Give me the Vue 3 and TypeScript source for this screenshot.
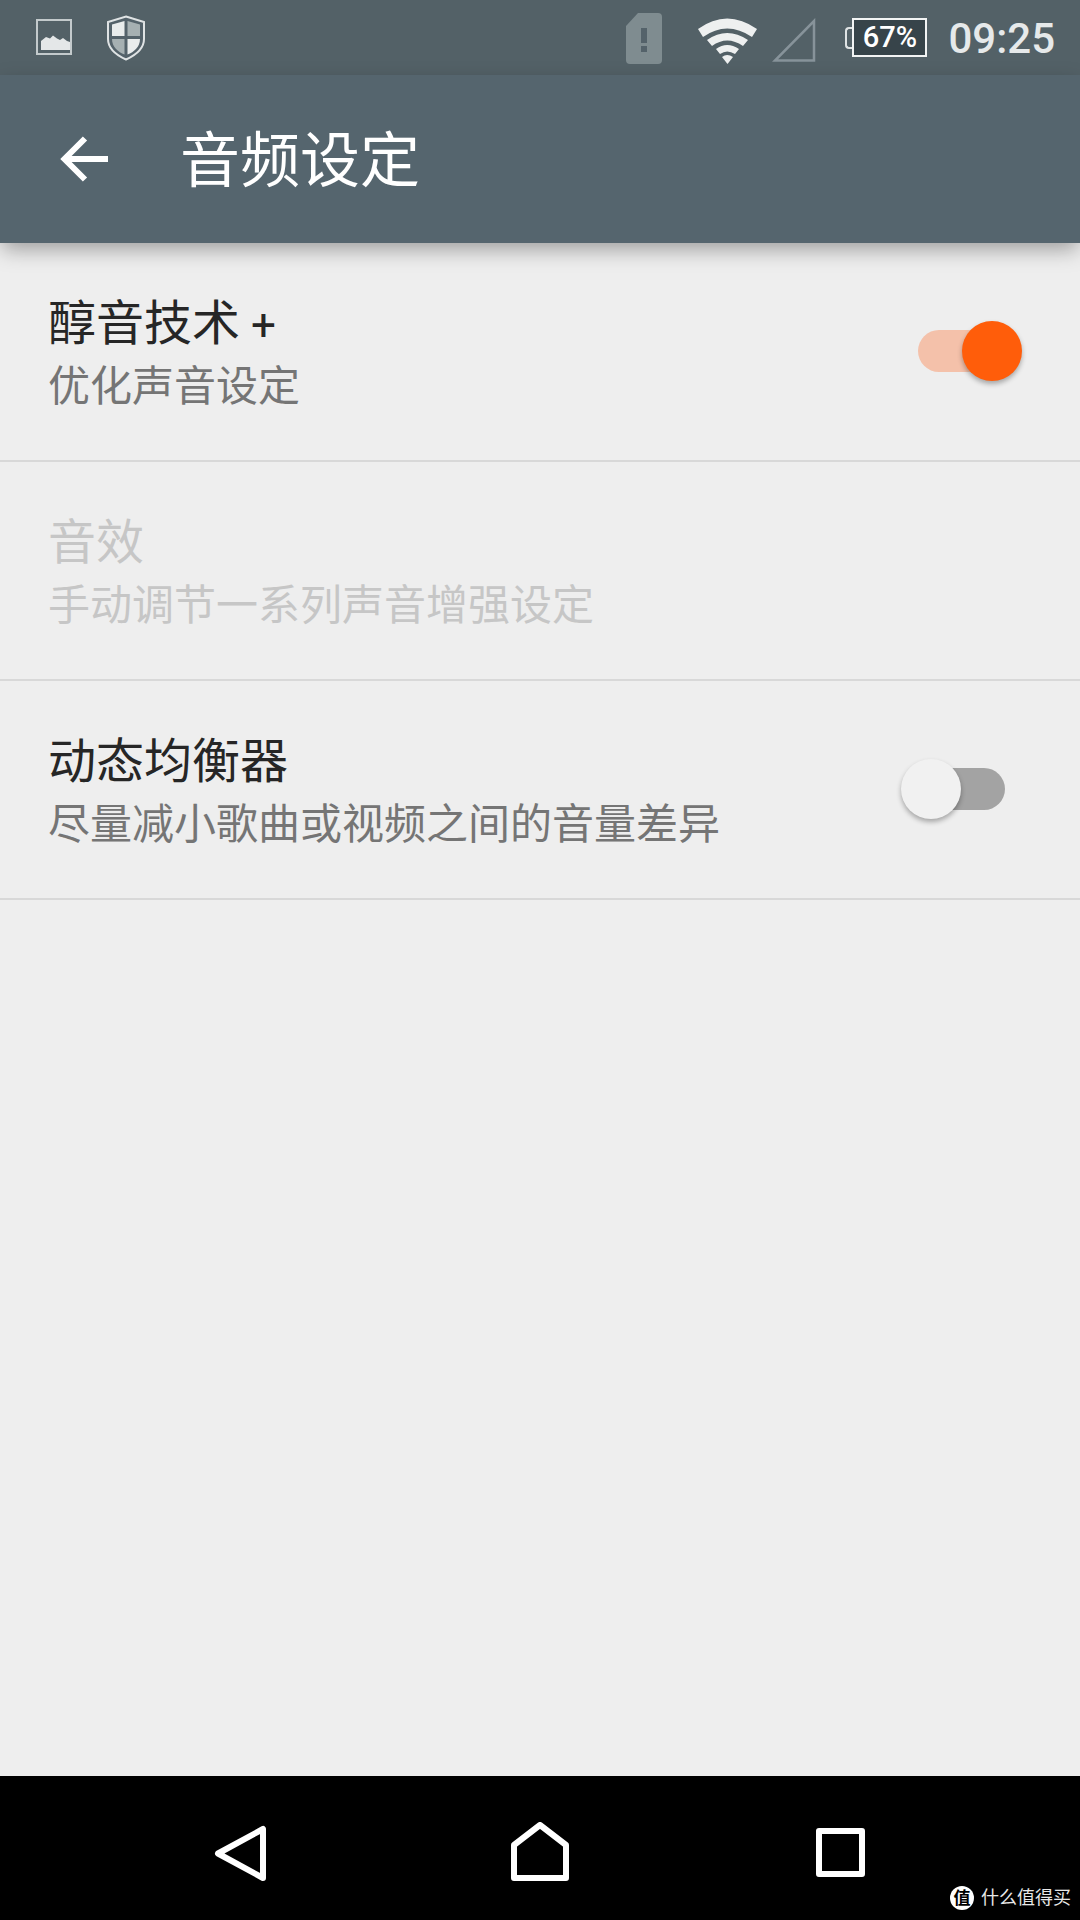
<template>
  <div class="page">
    <header class="status-bar">
      <svg class="ic-image" viewBox="0 0 36 36">
        <rect x="1" y="1" width="34" height="34" fill="none" stroke="#c3cacc" stroke-width="2" />
        <path d="M5 31V22l5-4 4 1.500 3-3 4 3 3 1.500 3-2 4 3 3 1V31Z" fill="#e4e7e8" />
      </svg>
      <svg class="ic-shield" viewBox="0 0 38 46">
        <path d="M19 1.500 37 7v17c0 10-8 16-18 20.500C9 40 1 34 1 24V7Z" fill="#54626a" stroke="#dfe3e4" stroke-width="2" />
        <path d="M5 9.500 17.500 6v15H5Z" fill="#e9ecec" />
        <path d="M20.500 6 33 9.500V21H20.500Z" fill="#a6b0b2" />
        <path d="M5 24h12.500v15.500C11 37 5 32 5 24Z" fill="#a6b0b2" />
        <path d="M20.500 24H33c0 8-6 13-12.500 15.500Z" fill="#e9ecec" />
      </svg>
      <span class="spacer"></span>
      <svg class="ic-sim" viewBox="0 0 36 51">
        <path d="M12 0h20q4 0 4 4v43q0 4-4 4H4q-4 0-4-4V13Z" fill="#7f8c90" />
        <rect x="15" y="15" width="6" height="15" fill="#54626a" />
        <rect x="15" y="33" width="6" height="6" fill="#54626a" />
      </svg>
      <svg class="ic-wifi" viewBox="0 0 59 47">
        <path d="M0 12Q29-9 59 12L54 20Q29 3 5 20Z" fill="#eef0f0" />
        <path d="M9 23Q29 9 50 23L45 29Q29 18 14 29Z" fill="#eef0f0" />
        <path d="M18 32Q29 24 41 32L37 37Q29 32 22 37Z" fill="#eef0f0" />
        <path d="M24 40Q29 36 35 40L29.500 47Z" fill="#eef0f0" />
      </svg>
      <svg class="ic-signal" viewBox="0 0 44 44">
        <path d="M42 3V42.500H3Z" fill="none" stroke="#87939a" stroke-width="2.500" />
      </svg>
      <div class="battery">
        <span class="battery-cap"></span>
        <span class="battery-body">67%</span>
      </div>
      <span class="clock">09:25</span>
    </header>

    <div class="toolbar">
      <svg class="ic-back" viewBox="0 0 48 48">
        <path d="M48 24H7M25 3.500 4.500 24 25 44.500" fill="none" stroke="#fff" stroke-width="6" />
      </svg>
      <h1 class="toolbar-title">音频设定</h1>
    </div>

    <main class="list">
      <div v-for="row in rows" :key="row.title" class="row" :class="{ disabled: row.disabled }">
        <div class="row-text">
          <div class="row-title">{{ row.title }}<span v-if="row.plus" class="plus"> +</span></div>
          <div class="row-sub">{{ row.sub }}</div>
        </div>
        <div v-if="row.on !== undefined" class="switch" :class="{ on: row.on }">
          <span class="track"></span>
          <span class="thumb"></span>
        </div>
      </div>
    </main>

    <nav class="nav-bar">
      <svg class="ic-nav-back" viewBox="0 0 52 57">
        <path d="M49 4V53L4 28.500Z" fill="none" stroke="#fff" stroke-width="6" stroke-linejoin="round" />
      </svg>
      <svg class="ic-nav-home" viewBox="0 0 58 59">
        <path d="M3 56V23L29 3 55 23V56Z" fill="none" stroke="#fff" stroke-width="6" stroke-linejoin="round" />
      </svg>
      <span class="nav-square"></span>
      <div class="watermark">
        <span class="watermark-badge">值</span>
        <span>什么值得买</span>
      </div>
    </nav>
  </div>
</template>

<script setup lang="ts">
interface SettingRow {
  title: string
  sub: string
  plus?: boolean
  on?: boolean
  disabled?: boolean
}

const rows: SettingRow[] = [
  { title: '醇音技术', plus: true, sub: '优化声音设定', on: true },
  { title: '音效', sub: '手动调节一系列声音增强设定', disabled: true },
  { title: '动态均衡器', sub: '尽量减小歌曲或视频之间的音量差异', on: false },
]
</script>

<style>
body {
  margin: 0;
}
</style>

<style scoped>
.page {
  width: 1080px;
  height: 1920px;
  display: flex;
  flex-direction: column;
  background: #eeeeee;
  font-family: Roboto, "Noto Sans CJK SC", sans-serif;
  overflow: hidden;
}

.status-bar {
  height: 75px;
  flex: none;
  display: flex;
  align-items: flex-start;
  padding-left: 36px;
  background: #536167;
  box-sizing: border-box;
}

.ic-image {
  width: 36px;
  height: 36px;
  margin-top: 19px;
}

.ic-shield {
  width: 38px;
  height: 46px;
  margin: 15px 0 0 35px;
}

.spacer {
  flex: 1;
}

.ic-sim {
  width: 36px;
  height: 51px;
  margin-top: 13px;
}

.ic-wifi {
  width: 59px;
  height: 47px;
  margin: 17px 0 0 36px;
}

.ic-signal {
  width: 44px;
  height: 44px;
  margin: 18px 0 0 15px;
}

.battery {
  display: flex;
  align-items: center;
  margin: 18px 0 0 29px;
}

.battery-cap {
  width: 7px;
  height: 22px;
  border: 2px solid #dfe3e4;
  border-right: none;
  border-radius: 4px 0 0 4px;
  box-sizing: border-box;
}

.battery-body {
  width: 75px;
  height: 39px;
  box-sizing: border-box;
  border: 2px solid #f2f4f4;
  background: #37444a;
  color: #fff;
  font-size: 29px;
  font-weight: 500;
  line-height: 35px;
  text-align: center;
}

.clock {
  margin: 15px 25px 0 21px;
  color: #e6e9ea;
  font-size: 42px;
  font-weight: 500;
  line-height: 48px;
}

.toolbar {
  height: 168px;
  flex: none;
  display: flex;
  align-items: center;
  padding-left: 60px;
  background: #55656e;
  box-shadow: 0 8px 20px -2px rgba(0, 0, 0, 0.35);
  position: relative;
  box-sizing: border-box;
}

.ic-back {
  width: 48px;
  height: 48px;
}

.toolbar-title {
  margin: 6px 0 0 72px;
  color: #fff;
  font-size: 60px;
  font-weight: 400;
  line-height: 80px;
}

.list {
  flex: 1;
}

.row {
  height: 219px;
  box-sizing: border-box;
  border-bottom: 2px solid #d8d8d8;
  display: flex;
  align-items: flex-start;
  justify-content: space-between;
  padding: 48px 0 0 48px;
}

.row-title {
  height: 66px;
  color: #262626;
  font-size: 48px;
  line-height: 66px;
}

.plus {
  font-size: 44px;
  line-height: 1;
}

.row-sub {
  margin-top: 2px;
  color: #757575;
  font-size: 42px;
  line-height: 56px;
}

.row.disabled .row-title,
.row.disabled .row-sub {
  color: #c6c6c6;
}

.switch {
  position: relative;
  width: 121px;
  height: 60px;
  margin: 30px 58px 0 0;
}

.track {
  position: absolute;
  left: 17px;
  top: 9px;
  width: 87px;
  height: 42px;
  border-radius: 21px;
  background: #a3a3a3;
}

.thumb {
  position: absolute;
  left: 0;
  top: 0;
  width: 60px;
  height: 60px;
  border-radius: 50%;
  background: #f1f1f1;
  box-shadow: 0 3px 5px rgba(0, 0, 0, 0.3);
}

.switch.on .track {
  background: #f4c1aa;
}

.switch.on .thumb {
  left: 61px;
  background: #ff5d0a;
}

.nav-bar {
  height: 144px;
  flex: none;
  position: relative;
  background: #000;
}

.ic-nav-back,
.ic-nav-home,
.nav-square {
  position: absolute;
}

.ic-nav-back {
  left: 214px;
  top: 49px;
  width: 52px;
  height: 57px;
}

.ic-nav-home {
  left: 511px;
  top: 46px;
  width: 58px;
  height: 59px;
}

.nav-square {
  left: 816px;
  top: 52px;
  width: 49px;
  height: 49px;
  box-sizing: border-box;
  border: 6px solid #fff;
  border-radius: 3px;
}

.watermark {
  position: absolute;
  left: 950px;
  top: 110px;
  display: flex;
  align-items: center;
  gap: 7px;
  color: #e8e8e8;
  font-size: 18px;
  line-height: 24px;
}

.watermark-badge {
  width: 24px;
  height: 24px;
  border-radius: 50%;
  background: #fff;
  color: #000;
  font-size: 17px;
  font-weight: 700;
  text-align: center;
}
</style>
